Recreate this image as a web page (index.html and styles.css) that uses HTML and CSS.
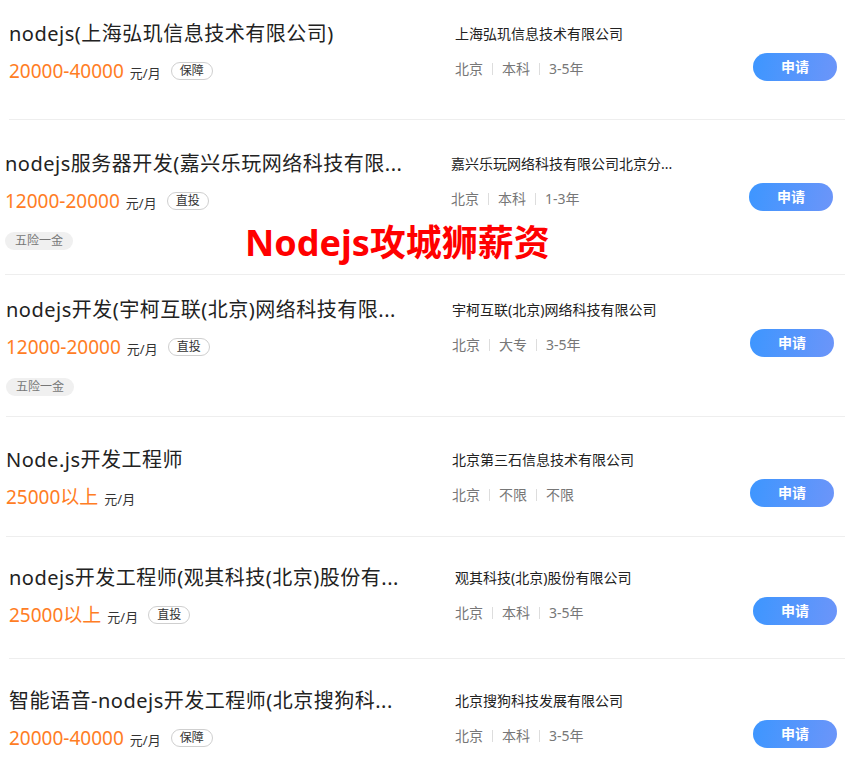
FILE: index.html
```html
<!DOCTYPE html>
<html lang="zh-CN">
<head>
    <meta charset="UTF-8" />
    <meta name="viewport" content="width=device-width, initial-scale=1.0" />
    <title>Nodejs攻城狮薪资</title>
    <link rel="stylesheet" href="styles.css">
</head>
<body>
    <div class="page">

      <!-- job 1 -->
      <div class="job job-1">
        <div class="job-main">
          <div class="job-title">nodejs(上海弘玑信息技术有限公司)</div>
          <div class="job-salary">
            <span class="salary">20000-40000</span>
            <span class="unit">元/月</span>
            <span class="tag">保障</span>
          </div>
        </div>
        <div class="job-side">
          <div class="company">上海弘玑信息技术有限公司</div>
          <div class="meta-row">
            <div class="meta"><span>北京</span><span>本科</span><span>3-5年</span></div>
            <a href="#" class="apply">申请</a>
          </div>
        </div>
      </div>

      <!-- job 2 -->
      <div class="job job-2">
        <div class="job-main">
          <div class="job-title">nodejs服务器开发(嘉兴乐玩网络科技有限...</div>
          <div class="job-salary">
            <span class="salary">12000-20000</span>
            <span class="unit">元/月</span>
            <span class="tag">直投</span>
          </div>
          <div class="welfare"><span>五险一金</span></div>
        </div>
        <div class="job-side">
          <div class="company">嘉兴乐玩网络科技有限公司北京分...</div>
          <div class="meta-row">
            <div class="meta"><span>北京</span><span>本科</span><span>1-3年</span></div>
            <a href="#" class="apply">申请</a>
          </div>
        </div>
      </div>

      <!-- job 3 -->
      <div class="job job-3">
        <div class="job-main">
          <div class="job-title">nodejs开发(宇柯互联(北京)网络科技有限...</div>
          <div class="job-salary">
            <span class="salary">12000-20000</span>
            <span class="unit">元/月</span>
            <span class="tag">直投</span>
          </div>
          <div class="welfare"><span>五险一金</span></div>
        </div>
        <div class="job-side">
          <div class="company">宇柯互联(北京)网络科技有限公司</div>
          <div class="meta-row">
            <div class="meta"><span>北京</span><span>大专</span><span>3-5年</span></div>
            <a href="#" class="apply">申请</a>
          </div>
        </div>
      </div>

      <!-- job 4 -->
      <div class="job job-4">
        <div class="job-main">
          <div class="job-title">Node.js开发工程师</div>
          <div class="job-salary">
            <span class="salary">25000以上</span>
            <span class="unit">元/月</span>
          </div>
        </div>
        <div class="job-side">
          <div class="company">北京第三石信息技术有限公司</div>
          <div class="meta-row">
            <div class="meta"><span>北京</span><span>不限</span><span>不限</span></div>
            <a href="#" class="apply">申请</a>
          </div>
        </div>
      </div>

      <!-- job 5 -->
      <div class="job job-5">
        <div class="job-main">
          <div class="job-title">nodejs开发工程师(观其科技(北京)股份有...</div>
          <div class="job-salary">
            <span class="salary">25000以上</span>
            <span class="unit">元/月</span>
            <span class="tag">直投</span>
          </div>
        </div>
        <div class="job-side">
          <div class="company">观其科技(北京)股份有限公司</div>
          <div class="meta-row">
            <div class="meta"><span>北京</span><span>本科</span><span>3-5年</span></div>
            <a href="#" class="apply">申请</a>
          </div>
        </div>
      </div>

      <!-- job 6 -->
      <div class="job job-6">
        <div class="job-main">
          <div class="job-title">智能语音-nodejs开发工程师(北京搜狗科...</div>
          <div class="job-salary">
            <span class="salary">20000-40000</span>
            <span class="unit">元/月</span>
            <span class="tag">保障</span>
          </div>
        </div>
        <div class="job-side">
          <div class="company">北京搜狗科技发展有限公司</div>
          <div class="meta-row">
            <div class="meta"><span>北京</span><span>本科</span><span>3-5年</span></div>
            <a href="#" class="apply">申请</a>
          </div>
        </div>
      </div>

      <!-- red caption over the list -->
      <div class="caption">Nodejs攻城狮薪资</div>
    </div>
</body>
</html>
```

FILE: styles.css
```css
body {
  margin: 0;
  font-family: "Noto Sans", "Noto Sans CJK SC", sans-serif;
  background: #fff;
  color: #222;
  overflow: hidden;
}

.page {
  position: relative;
}

.job {
  display: flex;
  border-bottom: 1px solid #eeeeee;
}

/* each row was clipped from a different screenshot, so offsets differ */
.job-1 { margin-left: 9px; padding: 20px 0 36px; }
.job-2 { margin-left: 5px; padding: 30px 0 28px; }
.job-3 { margin-left: 6px; padding: 21px 0 24px; }
.job-4 { margin-left: 6px; padding: 29px 0 27px; }
.job-5 { margin-left: 9px; padding: 27px 0 31px; }
.job-6 { margin-left: 9px; padding: 28px 0 30px; }

.job-main {
  width: 446px;
  flex: none;
}

.job-title {
  font-size: 20px;
  line-height: 28px;
  letter-spacing: 0.5px;
  white-space: nowrap;
  color: #222;
}

.job-salary {
  display: flex;
  align-items: baseline;
  height: 24px;
  margin-top: 11px;
}

.salary {
  font-size: 19px;
  line-height: 24px;
  color: #ff7d24;
}

.unit {
  font-size: 13px;
  color: #333;
  margin-left: 6px;
}

.tag {
  align-self: center;
  margin-left: 10px;
  padding: 0 8px;
  height: 16px;
  line-height: 16px;
  font-size: 12px;
  color: #333;
  border: 1px solid #cfcfcf;
  border-radius: 9px;
}

.welfare {
  margin-top: 15px;
  height: 18px;
}

.welfare span {
  display: inline-block;
  padding: 0 10px;
  height: 18px;
  line-height: 18px;
  font-size: 12px;
  color: #777;
  background-color: #f0f0f0;
  border-radius: 9px;
}

.job-side {
  width: 382px;
  flex: none;
  display: flex;
  flex-direction: column;
  gap: 6px;
}

.company {
  font-size: 14px;
  line-height: 28px;
  color: #222;
  white-space: nowrap;
}

.meta-row {
  display: flex;
  justify-content: space-between;
  align-items: center;
  height: 28px;
}

.meta {
  font-size: 14px;
  color: #777;
}

.meta span + span::before {
  content: "";
  display: inline-block;
  width: 1px;
  height: 12px;
  background-color: #dddddd;
  margin: 0 9px;
  vertical-align: -1px;
}

.apply {
  width: 84px;
  height: 28px;
  line-height: 28px;
  border-radius: 14px;
  text-align: center;
  text-decoration: none;
  font-size: 14px;
  font-weight: bold;
  color: #fff;
  background: linear-gradient(100deg, #3d96ff, #6c95f9);
  margin-top: -2px;
}

.caption {
  position: absolute;
  left: 245px;
  top: 225px;
  font-size: 36px;
  line-height: 36px;
  font-weight: bold;
  color: #ff0000;
  white-space: nowrap;
}
```
